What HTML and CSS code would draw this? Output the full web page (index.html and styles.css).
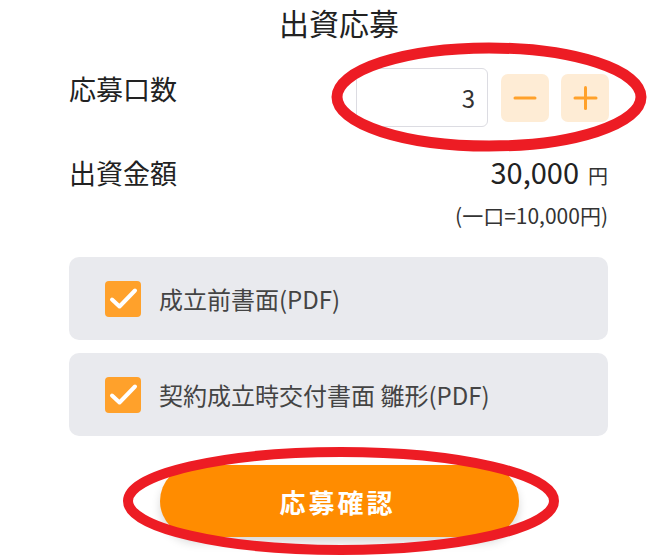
FILE: index.html
```html
<!DOCTYPE html>
<html lang="ja">
<head>
<meta charset="utf-8">
<title>出資応募</title>
<link rel="stylesheet" href="styles.css">
</head>
<body>
<div class="page">
  <h1 class="title">出資応募</h1>

  <div class="row row-count">
    <div class="label">応募口数</div>
    <div class="controls">
      <div class="count-input">3</div>
      <button class="step" aria-label="減らす">
        <svg width="48" height="48" viewBox="0 0 48 48"><line x1="14" y1="24" x2="34" y2="24" stroke="#ffa12b" stroke-width="3" stroke-linecap="round"/></svg>
      </button>
      <button class="step" aria-label="増やす">
        <svg width="48" height="48" viewBox="0 0 48 48"><line x1="14" y1="24" x2="35" y2="24" stroke="#ffa12b" stroke-width="3" stroke-linecap="round"/><line x1="24.5" y1="13.5" x2="24.5" y2="34.5" stroke="#ffa12b" stroke-width="3" stroke-linecap="round"/></svg>
      </button>
    </div>
  </div>

  <div class="row row-amount">
    <div class="label">出資金額</div>
    <div class="amount"><span class="num">30,000</span><span class="yen">円</span></div>
  </div>
  <div class="unit">(一口=10,000円)</div>

  <div class="cards">
    <label class="card">
      <span class="check"><svg width="36" height="36" viewBox="0 0 36 36"><polyline points="7,18.5 14.5,25.5 30,9.5" fill="none" stroke="#fff" stroke-width="4" stroke-linecap="round" stroke-linejoin="round"/></svg></span>
      <span class="card-text">成立前書面(PDF)</span>
    </label>
    <label class="card">
      <span class="check"><svg width="36" height="36" viewBox="0 0 36 36"><polyline points="7,18.5 14.5,25.5 30,9.5" fill="none" stroke="#fff" stroke-width="4" stroke-linecap="round" stroke-linejoin="round"/></svg></span>
      <span class="card-text">契約成立時交付書面 雛形(PDF)</span>
    </label>
  </div>

  <button class="submit">応募確認</button>
</div>

<svg class="marks" width="668" height="559" viewBox="0 0 668 559">
  <ellipse cx="489" cy="97" rx="152" ry="49" fill="none" stroke="#ed1c24" stroke-width="11"/>
  <ellipse cx="341" cy="501" rx="213" ry="49" fill="none" stroke="#ed1c24" stroke-width="10"/>
</svg>
</body>
</html>
```
FILE: styles.css
```css
html, body {
  margin: 0;
  padding: 0;
  background: #fff;
}
body {
  font-family: "Noto Sans CJK JP", "Noto Sans", sans-serif;
  color: #222;
  width: 668px;
  height: 559px;
  overflow: hidden;
  position: relative;
}
.page {
  width: 540px;
  margin-left: 69px;
}
.title {
  margin: 0;
  font-size: 30px;
  font-weight: 400;
  line-height: 44px;
  text-align: center;
  color: #222;
}
.row {
  display: flex;
  justify-content: space-between;
}
.row-count {
  margin-top: 24px;
  align-items: flex-start;
}
.label {
  font-size: 27px;
  line-height: 36px;
  padding-top: 3px;
  color: #222;
}
.controls {
  display: flex;
  align-items: center;
  gap: 12px;
}
.count-input {
  box-sizing: border-box;
  width: 132px;
  height: 59px;
  border: 1px solid #dcdce2;
  border-radius: 6px;
  font-size: 24px;
  line-height: 57px;
  text-align: right;
  padding-right: 12px;
  color: #333;
  margin-right: 1px;
}
.step {
  width: 48px;
  height: 48px;
  padding: 0;
  border: 0;
  border-radius: 7px;
  background: #feecd5;
  display: flex;
  align-items: center;
  justify-content: center;
}
.row-amount {
  margin-top: 26px;
  align-items: baseline;
}
.row-amount .label {
  padding-top: 0;
}
.amount {
  display: flex;
  align-items: baseline;
  gap: 9px;
  padding-right: 1px;
}
.num {
  font-size: 29px;
  line-height: 36px;
  color: #222;
}
.yen {
  font-size: 20px;
  color: #333;
}
.unit {
  margin-top: 10px;
  text-align: right;
  font-size: 21px;
  line-height: 28px;
  color: #333;
  padding-right: 1px;
}
.cards {
  margin-top: 28px;
  display: flex;
  flex-direction: column;
  gap: 13px;
  padding-right: 1px;
}
.card {
  display: flex;
  align-items: center;
  gap: 18px;
  height: 83px;
  padding-left: 36px;
  background: #e9eaee;
  border-radius: 10px;
}
.check {
  width: 36px;
  height: 36px;
  border-radius: 4px;
  background: #ffa12b;
  display: flex;
}
.card-text {
  font-size: 24px;
  color: #444;
}
.submit {
  display: block;
  margin: 29px auto 0;
  width: 359px;
  height: 72px;
  border: 0;
  border-radius: 36px;
  background: #ff8c00;
  color: #fff;
  font-family: "Noto Sans CJK JP", sans-serif;
  font-size: 26px;
  font-weight: 700;
  letter-spacing: 3px;
  padding-left: 3px;
  box-shadow: 0 6px 10px rgba(0, 0, 0, 0.15);
}
.marks {
  position: absolute;
  left: 0;
  top: 0;
  pointer-events: none;
}
```
